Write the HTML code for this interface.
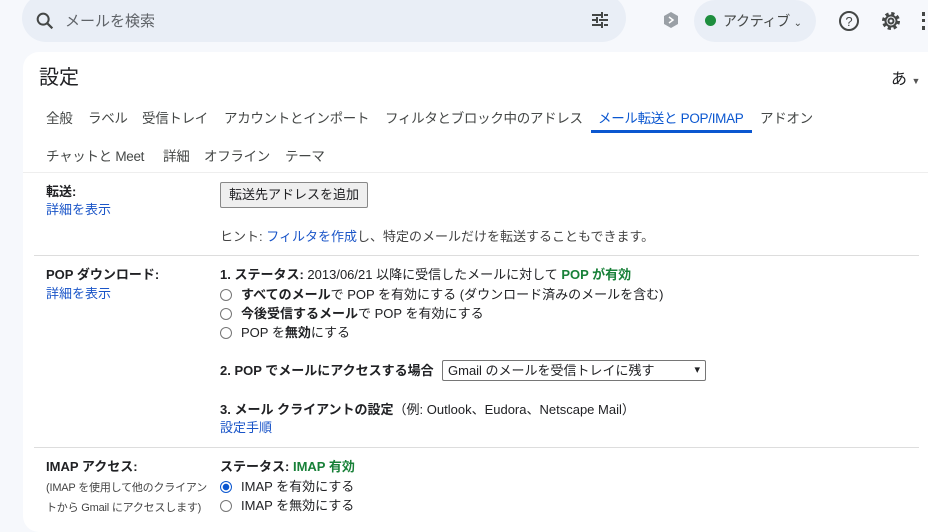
<!DOCTYPE html>
<html><head><meta charset="utf-8"><style>
*{margin:0;padding:0;box-sizing:border-box}
body{width:928px;height:515px;overflow:hidden;background:#f6f8fc;font-family:"Liberation Sans","Noto Sans CJK JP",sans-serif;color:#202124;position:relative}
.a{position:absolute;white-space:nowrap}
.s{font-size:13px;line-height:18px}
.lnk{color:#1a55c8}
.g{color:#188038;font-weight:bold}
b{font-weight:bold}
.rad{position:absolute;width:12px;height:12px;border:1px solid #767676;border-radius:50%;background:#fff}
.tab{font-size:13.5px;color:#444746;letter-spacing:-0.3px}
</style></head><body>
<div class="a" style="left:22px;top:-6px;width:604px;height:48px;background:#e9eef6;border-radius:24px"></div>
<svg class="a" style="left:34px;top:10px" width="22" height="22" viewBox="0 0 24 24"><circle cx="10" cy="10" r="6" fill="none" stroke="#444746" stroke-width="2.2"/><path d="M14.5 14.5L20 20" stroke="#444746" stroke-width="2.4"/></svg>
<div class="a" style="left:65px;top:10px;font-size:15px;color:#5f6368">メールを検索</div>
<svg class="a" style="left:590px;top:10px" width="20" height="20" viewBox="0 0 20 20" stroke="#444746" stroke-width="2"><path d="M2 5h9M14 5h4M2 10h4M9 10h9M2 15h9M14 15h4M12 2v6M7 7v6M12 12v6"/></svg>
<svg class="a" style="left:662px;top:11px" width="18" height="18" viewBox="0 0 18 18"><path d="M9 1l7 4v8l-7 4-7-4V5z" fill="#9aa0a6"/><path d="M7 6l4 3-4 3" stroke="#fff" stroke-width="1.5" fill="none"/></svg>
<div class="a" style="left:694px;top:0;width:122px;height:42px;background:#e9eef6;border-radius:21px"></div>
<div class="a" style="left:705px;top:15px;width:11px;height:11px;border-radius:50%;background:#1e8e3e"></div>
<div class="a" style="left:723px;top:11px;font-size:14px;color:#444746;letter-spacing:-0.3px">アクティブ <span style="font-size:10px">⌄</span></div>
<svg class="a" style="left:838px;top:10px" width="22" height="22" viewBox="0 0 22 22"><circle cx="11" cy="11" r="9" fill="none" stroke="#444746" stroke-width="2"/><text x="11" y="16" font-size="13" text-anchor="middle" fill="#444746" font-family="Liberation Sans">?</text></svg>
<svg class="a" style="left:879px;top:9px" width="24" height="24" viewBox="0 0 24 24"><circle cx="12" cy="12" r="7" fill="none" stroke="#444746" stroke-width="4" stroke-dasharray="3 2.5"/><circle cx="12" cy="12" r="5.5" fill="none" stroke="#444746" stroke-width="2"/><circle cx="12" cy="12" r="2.5" fill="none" stroke="#444746" stroke-width="2"/></svg>
<div class="a" style="left:922px;top:12px;width:4px;height:18px;border-left:3px dotted #444746"></div>

<div class="a" style="left:23px;top:52px;width:920px;height:480px;background:#fff;border-radius:16px"></div>
<div class="a" style="left:39px;top:61px;font-size:20px;color:#202124">設定</div>
<div class="a" style="left:891px;top:65px;font-size:16px">あ <span style="font-size:9px;color:#555">▼</span></div>

<div class="a tab" style="left:46px;top:107px">全般</div>
<div class="a tab" style="left:88px;top:107px">ラベル</div>
<div class="a tab" style="left:142px;top:107px">受信トレイ</div>
<div class="a tab" style="left:224px;top:107px">アカウントとインポート</div>
<div class="a tab" style="left:385px;top:107px">フィルタとブロック中のアドレス</div>
<div class="a tab" style="left:598px;top:107px;color:#0b57d0">メール転送と POP/IMAP</div>
<div class="a" style="left:591px;top:130px;width:161px;height:3px;background:#0b57d0"></div>
<div class="a tab" style="left:760px;top:107px">アドオン</div>
<div class="a tab" style="left:46px;top:145px">チャットと Meet</div>
<div class="a tab" style="left:163px;top:145px">詳細</div>
<div class="a tab" style="left:204px;top:145px">オフライン</div>
<div class="a tab" style="left:285px;top:145px">テーマ</div>
<div class="a" style="left:23px;top:172px;width:905px;height:1px;background:#eee"></div>

<div class="a s" style="left:46px;top:183px"><b>転送:</b></div>
<div class="a s lnk" style="left:46px;top:201px">詳細を表示</div>
<div class="a s" style="left:220px;top:182px;width:148px;height:26px;border:1px solid #888;border-radius:2px;background:#efefef;text-align:center;line-height:24px">転送先アドレスを追加</div>
<div class="a s" style="left:220px;top:228px;color:#444">ヒント: <span class="lnk">フィルタを作成</span>し、特定のメールだけを転送することもできます。</div>
<div class="a" style="left:34px;top:255px;width:885px;height:1px;background:#ddd"></div>

<div class="a s" style="left:46px;top:266px"><b>POP ダウンロード:</b></div>
<div class="a s lnk" style="left:46px;top:285px">詳細を表示</div>
<div class="a s" style="left:220px;top:266px"><b>1. ステータス:</b> 2013/06/21 以降に受信したメールに対して <span class="g">POP が有効</span></div>
<div class="rad" style="left:220px;top:289px"></div>
<div class="a s" style="left:241px;top:286px"><b>すべてのメール</b>で POP を有効にする (ダウンロード済みのメールを含む)</div>
<div class="rad" style="left:220px;top:308px"></div>
<div class="a s" style="left:241px;top:305px"><b>今後受信するメール</b>で POP を有効にする</div>
<div class="rad" style="left:220px;top:327px"></div>
<div class="a s" style="left:241px;top:324px">POP を<b>無効</b>にする</div>

<div class="a s" style="left:220px;top:362px"><b>2. POP でメールにアクセスする場合</b></div>
<div class="a s" style="left:442px;top:360px;width:264px;height:21px;border:1px solid #767676;border-radius:2px;padding-left:5px;line-height:19px">Gmail のメールを受信トレイに残す<span style="position:absolute;right:5px;font-size:11px">▾</span></div>
<div class="a s" style="left:220px;top:401px"><b>3. メール クライアントの設定</b>（例: Outlook、Eudora、Netscape Mail）</div>
<div class="a s lnk" style="left:220px;top:419px">設定手順</div>
<div class="a" style="left:34px;top:447px;width:885px;height:1px;background:#ddd"></div>

<div class="a s" style="left:46px;top:458px"><b>IMAP アクセス:</b></div>
<div class="a" style="left:46px;top:478px;font-size:11px;line-height:20px;color:#444;letter-spacing:-0.2px">(IMAP を使用して他のクライアン<br>トから Gmail にアクセスします)</div>
<div class="a s" style="left:220px;top:458px"><b>ステータス:</b> <span class="g">IMAP 有効</span></div>
<div class="rad" style="left:220px;top:481px;border-color:#0b57d0;background:radial-gradient(circle,#0b57d0 3px,#fff 3.5px)"></div>
<div class="a s" style="left:241px;top:478px">IMAP を有効にする</div>
<div class="rad" style="left:220px;top:500px"></div>
<div class="a s" style="left:241px;top:497px">IMAP を無効にする</div>
</body></html>
